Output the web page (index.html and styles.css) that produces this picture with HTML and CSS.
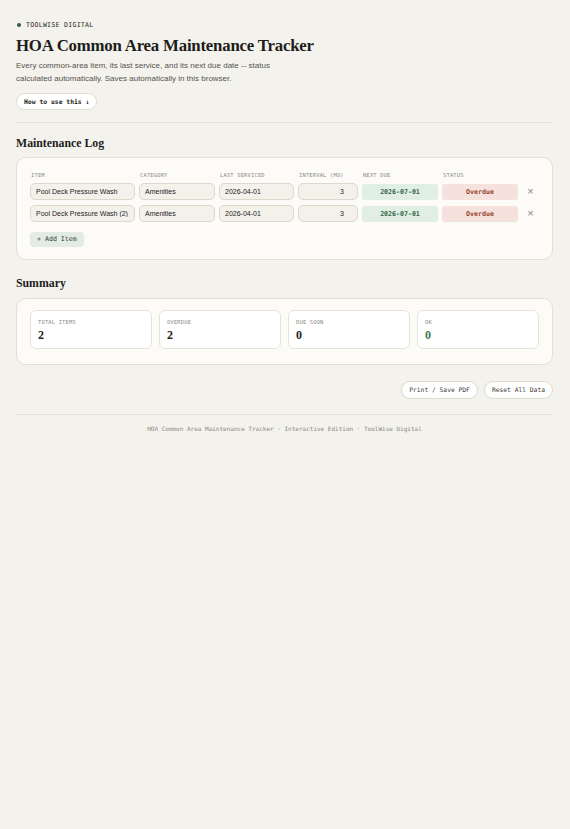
FILE: index.html
```html
<!DOCTYPE html>
<html lang="en">

<head>
    <meta charset="UTF-8">
    <meta name="viewport" content="width=device-width, initial-scale=1.0">
    <title>HOA Common Area Maintenance Tracker</title>
    <link rel="stylesheet" href="styles.css">
</head>

<body>
    <div class="page">
        <header class="top">
            <div class="eyebrow"><span class="dot"></span>TOOLWISE DIGITAL</div>
            <h1>HOA Common Area Maintenance Tracker</h1>
            <p class="intro">Every common-area item, its last service, and its next due date -- status calculated automatically. Saves automatically in this browser.</p>
            <button class="how">How to use this &darr;</button>
        </header>

        <section class="log-section">
            <h2>Maintenance Log</h2>
            <div class="card log">
                <div class="row head-row">
                    <span>Item</span>
                    <span>Category</span>
                    <span>Last Serviced</span>
                    <span>Interval (mo)</span>
                    <span>Next Due</span>
                    <span>Status</span>
                    <span></span>
                </div>
                <div class="row">
                    <input type="text" value="Pool Deck Pressure Wash">
                    <input type="text" value="Amenities">
                    <input type="text" value="2026-04-01">
                    <input type="text" class="num" value="3">
                    <div class="due">2026-07-01</div>
                    <div class="status overdue">Overdue</div>
                    <button class="remove">&times;</button>
                </div>
                <div class="row">
                    <input type="text" value="Pool Deck Pressure Wash (2)">
                    <input type="text" value="Amenities">
                    <input type="text" value="2026-04-01">
                    <input type="text" class="num" value="3">
                    <div class="due">2026-07-01</div>
                    <div class="status overdue">Overdue</div>
                    <button class="remove">&times;</button>
                </div>
                <button class="add">+ Add Item</button>
            </div>
        </section>

        <section class="summary-section">
            <h2>Summary</h2>
            <div class="card summary">
                <div class="stat">
                    <p class="label">Total Items</p>
                    <p class="value">2</p>
                </div>
                <div class="stat">
                    <p class="label">Overdue</p>
                    <p class="value">2</p>
                </div>
                <div class="stat">
                    <p class="label">Due Soon</p>
                    <p class="value">0</p>
                </div>
                <div class="stat">
                    <p class="label">OK</p>
                    <p class="value ok">0</p>
                </div>
            </div>
        </section>

        <div class="actions">
            <button class="pill">Print / Save PDF</button>
            <button class="pill">Reset All Data</button>
        </div>

        <footer>HOA Common Area Maintenance Tracker · Interactive Edition · ToolWise Digital</footer>
    </div>
</body>

</html>
```

FILE: styles.css
```css
* {
    margin: 0;
    padding: 0;
    box-sizing: border-box;
}

html,
body {
    background-color: #f4f2ed;
}

body {
    font-family: 'Liberation Sans', Arial, sans-serif;
    color: #1d1d1b;
}

.page {
    padding: 20px 17px 40px 16px;
}

.eyebrow {
    display: flex;
    align-items: center;
    gap: 5px;
    font-family: 'DejaVu Sans Mono', monospace;
    font-size: 6.6px;
    letter-spacing: 0.25px;
    color: #2b2b28;
    line-height: 10px;
    padding-left: 1px;
}

.dot {
    width: 4px;
    height: 4px;
    border-radius: 50%;
    background-color: #2f5d43;
}

h1 {
    font-family: 'Liberation Serif', 'Times New Roman', serif;
    font-size: 16.8px;
    font-weight: bold;
    letter-spacing: -0.2px;
    margin-top: 5px;
    line-height: 22px;
}

.intro {
    font-size: 8px;
    line-height: 12.5px;
    color: #55534e;
    max-width: 275px;
    margin-top: 3px;
}

.how {
    margin-top: 8px;
    height: 17px;
    padding: 0 7px;
    border: 1px solid #e0ddd4;
    border-radius: 9px;
    background-color: #fff;
    font-family: 'DejaVu Sans Mono', monospace;
    font-size: 6.4px;
    font-weight: bold;
    color: #1d1d1b;
}

.top {
    padding-bottom: 12px;
    border-bottom: 1px solid #e2dfd6;
}

h2 {
    font-family: 'Liberation Serif', 'Times New Roman', serif;
    font-size: 11.8px;
    font-weight: bold;
    line-height: 16px;
    margin-top: 12px;
    margin-bottom: 6px;
}

.summary-section h2 {
    margin-top: 15px;
    margin-bottom: 7px;
}

.card {
    background-color: #fcfbf8;
    border: 1px solid #e2dfd4;
    border-radius: 10px;
}

.log {
    padding: 14px 13px 12px 13px;
}

.row {
    display: grid;
    grid-template-columns: 105px 76px 75px 60px 76px 76px 1fr;
    column-gap: 4px;
    align-items: center;
    margin-bottom: 5px;
}

.head-row {
    margin-bottom: 5px;
}

.head-row span {
    font-family: 'DejaVu Sans Mono', monospace;
    font-size: 5.4px;
    letter-spacing: 0.2px;
    text-transform: uppercase;
    color: #8b8982;
    padding-left: 1px;
}

.row input {
    height: 17px;
    width: 100%;
    border: 1px solid #dcd8cc;
    border-radius: 5px;
    background-color: #f3f1ea;
    padding: 0 5px;
    font-family: 'Liberation Sans', Arial, sans-serif;
    font-size: 7px;
    color: #24231f;
}

.row input.num {
    text-align: right;
    padding-right: 13px;
}

.due,
.status {
    height: 16px;
    border-radius: 3px;
    display: flex;
    align-items: center;
    justify-content: center;
    font-family: 'DejaVu Sans Mono', monospace;
    font-size: 6.6px;
    font-weight: bold;
}

.due {
    background-color: #e0efe2;
    color: #2f6346;
}

.overdue {
    background-color: #f6e2dc;
    color: #983f2d;
}

.remove {
    border: none;
    background: none;
    color: #8a8780;
    font-size: 11px;
    line-height: 1;
    justify-self: center;
}

.add {
    margin-top: 3px;
    height: 15px;
    padding: 0 7px;
    border: none;
    border-radius: 4px;
    background-color: #e2ebe5;
    font-family: 'DejaVu Sans Mono', monospace;
    font-size: 6.6px;
    color: #2b3a33;
}

.summary {
    display: grid;
    grid-template-columns: repeat(4, 1fr);
    gap: 7px;
    padding: 11px 13px 15px 13px;
}

.stat {
    background-color: #fff;
    border: 1px solid #e6e3da;
    border-radius: 6px;
    padding: 8px 7px 6px 7px;
    height: 39px;
}

.label {
    font-family: 'DejaVu Sans Mono', monospace;
    font-size: 5.4px;
    letter-spacing: 0.2px;
    text-transform: uppercase;
    color: #8b8982;
}

.value {
    font-family: 'Liberation Serif', 'Times New Roman', serif;
    font-size: 12px;
    font-weight: bold;
    margin-top: 3px;
    color: #1f2422;
}

.value.ok {
    color: #3a7a55;
}

.actions {
    display: flex;
    justify-content: flex-end;
    gap: 6px;
    margin-top: 16px;
    padding-bottom: 15px;
    border-bottom: 1px solid #e2dfd6;
}

.pill {
    height: 18px;
    padding: 0 7px;
    border: 1px solid #dcd9cf;
    border-radius: 9px;
    background-color: #fff;
    font-family: 'DejaVu Sans Mono', monospace;
    font-size: 6.3px;
    color: #3a3935;
}

footer {
    text-align: center;
    margin-top: 10px;
    font-family: 'DejaVu Sans Mono', monospace;
    font-size: 6px;
    color: #8b8982;
}
```
